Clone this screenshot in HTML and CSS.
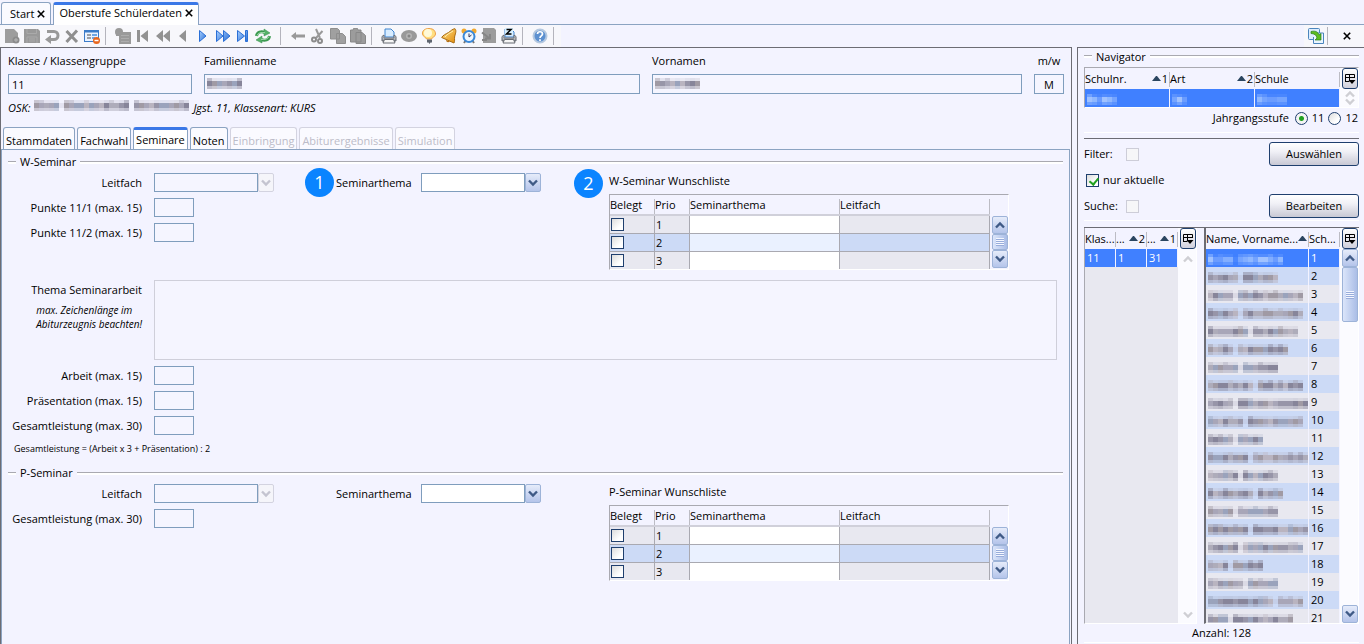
FILE: index.html
```html
<!DOCTYPE html>
<html lang="de">
<head>
  <meta charset="UTF-8" />
  <title>Oberstufe Schülerdaten</title>
  <meta name="viewport" content="width=device-width, initial-scale=1.0" />
  <link rel="stylesheet" href="styles.css">
</head>
<body>
  <svg class="defs" width="0" height="0">
    <defs>
      <linearGradient id="blue" x1="0" y1="0" x2="1" y2="1"><stop offset="0" stop-color="#a8d0ff" /><stop offset="1" stop-color="#2a6fd6" /></linearGradient>
      <linearGradient id="gold" x1="0" y1="0" x2="1" y2="1"><stop offset="0" stop-color="#ffe08a" /><stop offset="1" stop-color="#e08a08" /></linearGradient>
      <linearGradient id="metal" x1="0" y1="0" x2="0" y2="1"><stop offset="0" stop-color="#f4f4f4" /><stop offset="1" stop-color="#8e9298" /></linearGradient>
    </defs>
    <symbol id="down" viewBox="0 0 10 8"><path d="M1 1.5 5 5.5 9 1.5" fill="none" stroke="currentColor" stroke-width="2.4" /></symbol>
    <symbol id="up" viewBox="0 0 10 8"><path d="M1 6.5 5 2.500 9 6.500" fill="none" stroke="currentColor" stroke-width="2.4" /></symbol>
    <symbol id="close" viewBox="0 0 10 10"><path d="M1 1 9 9M9 1 1 9" fill="none" stroke="#000" stroke-width="2" /></symbol>
    <symbol id="sort" viewBox="0 0 9 5"><path d="M0 5 4 0h1L9 5z" fill="#2b4560" /></symbol>
    <symbol id="columns" viewBox="0 0 12 12"><path d="M1.500 8.500V1.500H10.500V5M1.500 4.500H10.500M5.500 1.500V8.500M1 8.500H5" fill="none" stroke="#000" /><path d="M4.500 7H11.500L8 11z" /></symbol>
    <symbol id="printer" viewBox="0 0 16 16">
      <path d="M4 1h6l3 3v5H4z" fill="#d8ecff" stroke="#3f84d0" />
      <path d="M1 8.500 3 7v3h10V7l2 1.500V13H1z" fill="url(#metal)" stroke="#666b72" />
      <path d="M3.500 11.500h9L14 15H2z" fill="#f5f5f5" stroke="#666b72" />
    </symbol>
  </svg>

  <nav class="window-tabs">
    <button class="tab">Start <svg width="8" height="8"><use href="#close" /></svg></button>
    <button class="tab active">Oberstufe Schülerdaten <svg width="8" height="8"><use href="#close" /></svg></button>
  </nav>

  <div class="toolbar">
    <div class="tools">
      <button aria-label="Neu"><svg viewBox="0 0 16 16"><path d="M1 1h9l4 4v10H1z" fill="#9d9d9d" /><circle cx="12" cy="12" r="3.500" fill="#8b8b8b" /><path d="M12 10v4M10 12h4" stroke="#b8b8b8" /></svg></button>
      <button aria-label="Speichern"><svg viewBox="0 0 16 16"><path d="M0 1h14l2 2v12H0z" fill="#999" /><path d="M3 1v4.500h9.500V1M3 15V9h10v6" fill="none" stroke="#aaa" /><path d="M5 11h6M5 13h6" stroke="#aaa" /></svg></button>
      <button aria-label="Rückgängig"><svg viewBox="0 0 16 16"><path d="M3 3.500h7a3.500 3.500 0 0 1 0 8H6" fill="none" stroke="#999" stroke-width="3" /><path d="M1 11.500 7 7v9z" fill="#999" /></svg></button>
      <button aria-label="Löschen"><svg viewBox="0 0 16 16"><path d="M2.500 3 13 14M13 2.500 2.500 14" stroke="#8f8f8f" stroke-width="3" /></svg></button>
      <button aria-label="Formular"><svg viewBox="0 0 16 16"><rect x=".5" y="2.500" width="14" height="11" fill="#eaf3ff" stroke="#3c7cc8" /><path d="M1 3.500h13" stroke="#3c7cc8" stroke-width="2" /><path d="M3 7h4M3 10h4" stroke="#4c4c4c" /><path d="M8 7h5M8 10h3" stroke="#6ea6e4" stroke-width="2" /><circle cx="12.500" cy="12.500" r="3.500" fill="#e8661c" /><path d="M10.500 12.500h4" stroke="#fff" stroke-width="1.500" /></svg></button>
      <i class="sep"></i>
      <button aria-label="Liste"><svg viewBox="0 0 16 16"><circle cx="4" cy="4" r="4" fill="#999" /><path d="M1 4h15v12H4V8H1z" fill="#9a9a9a" /><path d="M6 7.500h8M6 10.500h8M6 13.500h8" stroke="#adadad" /></svg></button>
      <button aria-label="Erster"><svg viewBox="0 0 16 16"><path d="M2 2h3v12H2zM13 2v12L5.500 8z" fill="#929292" /></svg></button>
      <button aria-label="Seite zurück"><svg viewBox="0 0 16 16"><path d="M8 2v12L1 8zM15 2v12L8 8z" fill="#929292" /></svg></button>
      <button aria-label="Zurück"><svg viewBox="0 0 16 16"><path d="M11 2v12L4 8z" fill="#929292" /></svg></button>
      <button aria-label="Vor"><svg viewBox="0 0 16 16"><path d="M4.500 2.500v11L11 8z" fill="url(#blue)" stroke="#2a6fd6" /></svg></button>
      <button aria-label="Seite vor"><svg viewBox="0 0 16 16"><path d="M1.500 2.500v11L8 8zM8.500 2.500v11L15 8z" fill="url(#blue)" stroke="#2a6fd6" /></svg></button>
      <button aria-label="Letzter"><svg viewBox="0 0 16 16"><path d="M2.500 2.500v11L9.500 8zM10.500 2.500h2v11h-2z" fill="url(#blue)" stroke="#2a6fd6" /></svg></button>
      <button aria-label="Aktualisieren"><svg viewBox="0 0 16 16"><path d="M1.500 8C2 4 6 3 10 4.500M14.500 8C14 12 10 13 6 11.500" fill="none" stroke="#3c9a50" stroke-width="3" /><path d="M9 1v7l6-3zM7 8v7l-6-3z" fill="#55b268" stroke="#328a48" stroke-width=".5" /><path d="M2 7.500C3 5 6 4 10 4.700M14 8.500C13 11 10 12 6 11.300" fill="none" stroke="#a4dcae" /></svg></button>
      <i class="sep wide"></i>
      <button aria-label="Pfeil"><svg viewBox="0 0 16 16"><path d="M1 8 6 4v2.500h9v3H6V12z" fill="#999" /></svg></button>
      <button aria-label="Ausschneiden"><svg viewBox="0 0 16 16"><path d="M6 1 10 10M12.500 3 6 10" stroke="#999" stroke-width="2" /><circle cx="4" cy="11.500" r="2" fill="none" stroke="#8c8c8c" stroke-width="2" /><circle cx="10" cy="13" r="2" fill="none" stroke="#8c8c8c" stroke-width="2" /></svg></button>
      <button aria-label="Kopieren"><svg viewBox="0 0 16 16"><path d="M.5.500h7l2 2V11h-9zM6.500 5.500h6l3 3v7h-9z" fill="#a0a0a0" stroke="#8e8e8e" /></svg></button>
      <button aria-label="Einfügen"><svg viewBox="0 0 16 16"><path d="M.500 2H3l1-2h3l1 2h3v12H.500zM6 4.500h6l3.500 3v8H6z" fill="#9c9c9c" stroke="#888" /></svg></button>
      <i class="sep"></i>
      <button aria-label="Drucken"><svg viewBox="0 0 16 16"><use href="#printer" /></svg></button>
      <button aria-label="Vorschau"><svg viewBox="0 0 16 16"><ellipse cx="8" cy="8" rx="8" ry="6" fill="#999" /><circle cx="8" cy="8" r="3" fill="#b4b4b4" /><circle cx="8" cy="8" r="1.500" fill="#858585" /></svg></button>
      <button aria-label="Tipp"><svg viewBox="0 0 16 16"><path d="M8 .5C3.500.500 1 3 1.500 6S5 9 5.500 11h5C11 9 14.500 9 14.500 6S12.500.500 8 .5z" fill="#ffdf80" stroke="#eda048" /><circle cx="7" cy="5" r="4" fill="#fff9d8" /><path d="M6 11.500h5v3H9.500L8.500 16 7.500 14.500H6z" fill="#5f6670" /></svg></button>
      <button aria-label="Erinnerung"><svg viewBox="0 0 16 16"><path d="M14 .7c-3 .3-4 2.300-6.500 3.800S2 7 .7 9.500L13 15c1-2 .3-3.500.6-6S16 3 14 .7z" fill="url(#gold)" stroke="#a86a10" /><path d="M5 12c0 2 2 3 4 1.500z" fill="#b87010" /><path d="M12 3C9 5 6 6 4 9" fill="none" stroke="#fff0b0" /></svg></button>
      <button aria-label="Wecker"><svg viewBox="0 0 16 16"><circle cx="3" cy="3" r="2.500" fill="#f0a830" /><circle cx="13" cy="3" r="2.500" fill="#f0a830" /><path d="M3 15 5 12M13 15 11 12" stroke="#777" stroke-width="2" /><circle cx="8" cy="8.500" r="5.500" fill="#eef7ff" stroke="#3a88d8" stroke-width="2" /><path d="M8 5.500V9l2.500-2" fill="none" stroke="#335" /></svg></button>
      <button aria-label="Export"><svg viewBox="0 0 16 16"><path d="M2 0h11l2 2v13H2z" fill="#9c9c9c" /><path d="M1 4.500 8 10M9 6v4.500H4M1 12h5" fill="none" stroke="#868686" stroke-width="2" /></svg></button>
      <button aria-label="Zeugnis drucken"><svg viewBox="0 0 16 16"><use href="#printer" /><path d="M4 0h8v7H4z" fill="#d8f0ff" /><path d="M5.500 1.500h4.500L5.500 6H10.500" fill="none" stroke="#000" stroke-width="1.500" /></svg></button>
      <i class="sep"></i>
      <button aria-label="Hilfe"><svg viewBox="0 0 16 16"><circle cx="8" cy="8" r="6.500" fill="#5c90d0" stroke="#b4c8e0" stroke-width="2" /><path d="M5.500 6C5.500 3 10.500 3 10.500 6 10.500 8 8 7.700 8 10M8 11.200v1.800" fill="none" stroke="#fff" stroke-width="1.700" /></svg></button>
      <i class="sep"></i>
    </div>
    <div class="tools right">
      <button aria-label="Ansicht wechseln"><svg viewBox="0 0 16 16"><rect x=".5" y=".5" width="11" height="11" rx="1" fill="#dcedff" stroke="#4b85bd" /><path d="M7 5h8.500v10.500H5.500V9" fill="#eaf5ff" stroke="#4b85bd" /><path d="M3 3.500c4-1 7 0 8 3.500l2-1.500v6.500H7l2-2C8.500 7 6 5.500 3 5.500z" fill="#5bbd20" stroke="#257a1a" stroke-width=".7" /></svg></button>
      <i class="sep"></i>
      <button class="shut" aria-label="Schließen"><svg viewBox="0 0 10 10"><use href="#close" /></svg></button>
    </div>
  </div>

  <div class="workspace">
    <main class="record">
      <div class="person">
        <div><label for="klasse">Klasse / Klassengruppe</label><input id="klasse" value="11" readonly /></div>
        <div><label for="name">Familienname</label><span class="masked"><input id="name" readonly /><i class="mosaic" data-words="33"></i></span></div>
        <div><label for="vorname">Vornamen</label><span class="masked"><input id="vorname" readonly /><i class="mosaic" data-words="42"></i></span></div>
        <div><label for="mw" class="center">m/w</label><input id="mw" class="center" value="M" readonly /></div>
      </div>
      <p class="osk"><span>OSK:</span> <i class="mosaic" data-words="25,65,55"></i> <span>Jgst. 11, Klassenart: KURS</span></p>

      <nav class="sub-tabs">
        <button>Stammdaten</button>
        <button>Fachwahl</button>
        <button class="active">Seminare</button>
        <button>Noten</button>
        <button disabled>Einbringung</button>
        <button disabled>Abiturergebnisse</button>
        <button disabled>Simulation</button>
      </nav>

      <div class="page">
        <h2 class="caption">W-Seminar</h2>
        <div class="seminar">
          <div class="fields">
            <label for="wLeit">Leitfach</label>
            <span class="combo off"><select id="wLeit" disabled></select><span><svg width="10" height="8"><use href="#down" /></svg></span></span>
            <label for="p1">Punkte 11/1 (max. 15)</label><input id="p1" />
            <label for="p2">Punkte 11/2 (max. 15)</label><input id="p2" />
          </div>
          <div class="topic">
            <label for="wThema"><b class="badge">1</b>Seminarthema</label>
            <span class="combo"><select id="wThema"></select><span><svg width="10" height="8"><use href="#down" /></svg></span></span>
          </div>
          <div class="wishes">
            <h3><b class="badge">2</b>W-Seminar Wunschliste</h3>
            <div class="grid-box">
              <table class="wish-table">
                <thead><tr><th class="belegt">Belegt</th><th class="prio">Prio</th><th>Seminarthema</th><th>Leitfach</th></tr></thead>
                <tbody>
                  <tr><td><input type="checkbox" aria-label="Belegt 1" /></td><td>1</td><td class="edit"></td><td></td></tr>
                  <tr><td><input type="checkbox" aria-label="Belegt 2" /></td><td>2</td><td class="edit"></td><td></td></tr>
                  <tr><td><input type="checkbox" aria-label="Belegt 3" /></td><td>3</td><td class="edit"></td><td></td></tr>
                </tbody>
              </table>
              <div class="scroll">
                <button aria-label="Nach oben"><svg width="10" height="8"><use href="#up" /></svg></button>
                <i class="thumb"></i>
                <button aria-label="Nach unten"><svg width="10" height="8"><use href="#down" /></svg></button>
              </div>
            </div>
          </div>
        </div>

        <div class="paper">
          <label for="thema">Thema Seminararbeit <small>max. Zeichenlänge im<br />Abiturzeugnis beachten!</small></label>
          <textarea id="thema"></textarea>
        </div>
        <div class="fields">
          <label for="arbeit">Arbeit (max. 15)</label><input id="arbeit" />
          <label for="praes">Präsentation (max. 15)</label><input id="praes" />
          <label for="wGesamt">Gesamtleistung (max. 30)</label><input id="wGesamt" />
        </div>
        <p class="formula">Gesamtleistung = (Arbeit x 3 + Präsentation) : 2</p>

        <h2 class="caption">P-Seminar</h2>
        <div class="seminar">
          <div class="fields">
            <label for="pLeit">Leitfach</label>
            <span class="combo off"><select id="pLeit" disabled></select><span><svg width="10" height="8"><use href="#down" /></svg></span></span>
            <label for="pGesamt">Gesamtleistung (max. 30)</label><input id="pGesamt" />
          </div>
          <div class="topic">
            <label for="pThema">Seminarthema</label>
            <span class="combo"><select id="pThema"></select><span><svg width="10" height="8"><use href="#down" /></svg></span></span>
          </div>
          <div class="wishes">
            <h3>P-Seminar Wunschliste</h3>
            <div class="grid-box">
              <table class="wish-table">
                <thead><tr><th class="belegt">Belegt</th><th class="prio">Prio</th><th>Seminarthema</th><th>Leitfach</th></tr></thead>
                <tbody>
                  <tr><td><input type="checkbox" aria-label="Belegt 1" /></td><td>1</td><td class="edit"></td><td></td></tr>
                  <tr><td><input type="checkbox" aria-label="Belegt 2" /></td><td>2</td><td class="edit"></td><td></td></tr>
                  <tr><td><input type="checkbox" aria-label="Belegt 3" /></td><td>3</td><td class="edit"></td><td></td></tr>
                </tbody>
              </table>
              <div class="scroll">
                <button aria-label="Nach oben"><svg width="10" height="8"><use href="#up" /></svg></button>
                <i class="thumb"></i>
                <button aria-label="Nach unten"><svg width="10" height="8"><use href="#down" /></svg></button>
              </div>
            </div>
          </div>
        </div>
      </div>
    </main>

    <aside class="navigator">
      <h2 class="caption">Navigator</h2>
      <div class="grid-box">
        <table class="list">
          <thead><tr>
            <th><span>Schulnr. <em><svg width="9" height="5"><use href="#sort" /></svg>1</em></span></th>
            <th><span>Art <em><svg width="9" height="5"><use href="#sort" /></svg>2</em></span></th>
            <th>Schule</th>
          </tr></thead>
          <tbody><tr class="selected"><td><i class="mosaic light" data-words="28"></i></td><td><i class="mosaic light" data-words="14"></i></td><td><i class="mosaic light" data-words="28"></i></td></tr></tbody>
        </table>
        <div class="scroll">
          <button class="pick" aria-label="Spalten"><svg width="12" height="12"><use href="#columns" /></svg></button>
          <div class="idle"><svg width="10" height="8"><use href="#up" /></svg><svg width="10" height="8"><use href="#down" /></svg></div>
        </div>
      </div>
      <div class="grade">
        <span>Jahrgangsstufe</span>
        <label><input type="radio" name="stufe" checked />11</label>
        <label><input type="radio" name="stufe" />12</label>
      </div>

      <div class="filters">
        <div class="line"><label for="filter">Filter:</label><input id="filter" type="checkbox" disabled /><button class="push">Auswählen</button></div>
        <div class="line"><label class="current"><input type="checkbox" checked />nur aktuelle</label></div>
        <div class="line"><label for="suche">Suche:</label><input id="suche" type="checkbox" disabled /><button class="push">Bearbeiten</button></div>
      </div>

      <div class="lists">
        <div class="grid-box classes">
          <div class="rows">
            <table class="list">
              <thead><tr>
                <th>Klas...</th>
                <th><span>... <em><svg width="9" height="5"><use href="#sort" /></svg>2</em></span></th>
                <th><span>... <em><svg width="9" height="5"><use href="#sort" /></svg>1</em></span></th>
              </tr></thead>
              <tbody><tr class="selected"><td>11</td><td>1</td><td>31</td></tr></tbody>
            </table>
          </div>
          <div class="scroll">
            <button class="pick" aria-label="Spalten"><svg width="12" height="12"><use href="#columns" /></svg></button>
            <div class="idle"><svg width="10" height="8"><use href="#up" /></svg><svg width="10" height="8"><use href="#down" /></svg></div>
          </div>
        </div>
        <div class="grid-box pupils">
          <div class="rows">
            <table class="list">
              <thead><tr>
                <th><span>Name, Vorname... <em><svg width="9" height="5"><use href="#sort" /></svg></em></span></th>
                <th class="nr">Sch...</th>
              </tr></thead>
              <tbody id="pupilRows"></tbody>
            </table>
          </div>
          <div class="scroll">
            <button class="pick" aria-label="Spalten"><svg width="12" height="12"><use href="#columns" /></svg></button>
            <button aria-label="Nach oben"><svg width="10" height="8"><use href="#up" /></svg></button>
            <i class="thumb tall"></i>
            <i class="track"></i>
            <button aria-label="Nach unten"><svg width="10" height="8"><use href="#down" /></svg></button>
          </div>
        </div>
      </div>
      <p class="count">Anzahl: 128</p>
    </aside>
  </div>
  <script src="script.js"></script>
</body>
</html>
```
FILE: styles.css
```css
* { box-sizing: border-box; }
body {
  margin: 0;
  height: 100vh;
  display: flex;
  flex-direction: column;
  overflow: hidden;
  background: #f3f3ff;
  color: #000;
  font: 11px/16px "Open Sans", "Noto Sans", sans-serif;
}
button, input, select, textarea { font: inherit; color: inherit; margin: 0; padding: 0; }
button { border: none; background: none; }
h2, h3, p { margin: 0; font-size: 11px; font-weight: normal; }
svg { display: block; flex: none; }
.defs { position: absolute; }

/* window tabs */
.window-tabs { display: flex; gap: 2px; height: 25px; padding: 2px 1px 0; border-bottom: 1px solid #8ba3c2; flex: none; }
.tab { display: flex; align-items: center; gap: 3px; padding: 0 5px 0 8px; border: 1px solid #8ba3c2; border-bottom: none; border-radius: 3px 3px 0 0; background: #fafaff; }
.tab.active { padding: 0 5px; border-top: 3px solid #3b78e7; background: #fff; margin-bottom: -1px; padding-bottom: 4px; }

/* toolbar */
.toolbar { display: flex; justify-content: space-between; height: 22px; flex: none; }
.tools { display: flex; align-items: center; padding-left: 2px; background: #f7f7fb; }
.tools button { width: 20px; height: 20px; padding: 2px; }
.tools svg { width: 16px; height: 16px; }
.sep { width: 1px; height: 18px; margin: 0 7px 0 3px; background: #b4b4bc; }
.sep.wide { margin-left: 7px; }
.tools.right .sep { margin: 0 9px 0 1px; }
.tools.right .shut svg { width: 8px; height: 8px; margin: auto; }
.tools.right { padding-right: 7px; }

.workspace { flex: 1; display: flex; gap: 5px; min-height: 0; }
.record { flex: 1; min-width: 0; display: flex; flex-direction: column; border: 1px solid #6c6c74; border-bottom: none; padding-right: 1px; }

.person { display: grid; grid-template-columns: 184fr 436fr 370fr 30px; gap: 12px; padding: 5px 6px 0 7px; }
.person label { display: block; height: 21px; }
.person input { display: block; width: 100%; height: 20px; padding: 0 3px; }
.person .center { text-align: center; }
input, textarea, select { border: 1px solid #7f9dbd; background: #f5f5ff; border-radius: 0; outline: none; }
.masked { display: block; position: relative; }
.masked .mosaic { position: absolute; left: 3px; top: 4px; }
.osk { display: flex; gap: 4px; padding: 6px 7px 0; height: 33px; align-items: flex-start; font-style: italic; }

.sub-tabs { display: flex; gap: 2px; height: 22px; padding: 0 2px; }
.sub-tabs button { padding: 4px 2px 0; border: 1px solid #8ba3c2; border-bottom: none; border-radius: 3px 3px 0 0; background: #fafaff; }
.sub-tabs .active { border-top: 3px solid #3b78e7; padding-top: 0; background: #fff; margin: 0 0 -1px; }
.sub-tabs button:disabled { color: #bcbcc8; border-color: #d3d3e0; }

.page { flex: 1; min-height: 0; overflow: hidden; border: 1px solid #8ba3c2; border-bottom: none; padding: 4px 6px 0; }
.caption { display: flex; align-items: center; gap: 4px; height: 16px; }
.caption::before, .caption::after { content: ""; height: 2px; border-top: 1px solid #a9a9b1; background: #fff; width: 8px; }
.caption::after { flex: 1; }

.seminar { display: grid; grid-template-columns: 266px 335px 1fr; padding-top: 3px; }
.fields { display: grid; grid-template-columns: 134px 1fr; gap: 6px 12px; align-content: start; align-items: center; line-height: 19px; }
.fields label { text-align: right; white-space: nowrap; }
.fields input { width: 40px; height: 19px; }
.combo { display: flex; height: 19px; }
.combo select { width: 104px; appearance: none; background: #fff; }
.combo > span { width: 16px; display: flex; align-items: center; justify-content: center; border: 1px solid #9db3d8; border-radius: 2px; background: linear-gradient(#e6ecfa, #b4c4ea); color: #3f5a86; }
.combo.off select { background: #f5f5ff; opacity: 1; }
.combo.off > span { border-color: #d3d3e0; background: #f5f5fa; color: #c4c4d0; }
.topic { display: flex; gap: 12px; line-height: 19px; align-items: flex-start; }
.topic label { position: relative; width: 135px; padding-left: 62px; white-space: nowrap; }
.badge { position: absolute; width: 29px; height: 29px; border-radius: 50%; background: #0a84ff; color: #fff; font: 18px/29px "Open Sans", sans-serif; text-align: center; }
.topic .badge { left: 31px; top: -5px; }
.wishes h3 { position: relative; height: 21px; line-height: 16px; }
.wishes .badge { left: -35px; top: -4px; }
.wishes { width: 400px; }

.paper { display: grid; grid-template-columns: 134px 1fr; gap: 12px; padding: 10px 6px 6px 0; }
.paper label { text-align: right; white-space: nowrap; line-height: 19px; }
.paper small { display: block; width: max-content; margin: 4px 0 0 auto; font-size: 10px; line-height: 14px; font-style: italic; text-align: left; }
.paper textarea { height: 80px; resize: none; border-color: #cfcfda; }
.formula { margin: 6px 0 8px 6px; font-size: 9px; line-height: 16px; }

/* grids */
.grid-box { display: flex; border: 1px solid #a9a9b1; border-right-color: #fff; border-bottom-color: #fff; }
table { border-collapse: separate; border-spacing: 0; table-layout: fixed; width: 100%; }
th { text-align: left; font-weight: normal; padding: 0 1px; height: 21px; white-space: nowrap; background: linear-gradient(#bcbcc4, #bcbcc4) right 4px / 1px 15px no-repeat; }
.wish-table th { border-bottom: 2px solid #d0d0da; padding: 0; }
.wish-table td { height: 18px; padding: 0 1px; border-right: 1px solid #a9a9b1; border-bottom: 1px solid #a9a9b1; background: #e8e8f0; line-height: 15px; }
.wish-table tr:last-child td { border-bottom: none; height: 17px; }
.wish-table tr:nth-child(2) td { background: #ccdaf6; }
.wish-table .edit { background: #fff; }
.wish-table tr:nth-child(2) .edit { background: #eaf1ff; }
.belegt { width: 45px; }
.prio { width: 35px; }

input[type="checkbox"] { appearance: none; display: block; width: 13px; height: 13px; border: 1px solid #1f3f6e; background: linear-gradient(135deg, #dcdcdc, #fff 70%); flex: none; }
input[type="checkbox"]:disabled { border-color: #cdcdd8; background: #f6f6f8; }
input[type="checkbox"]:checked::before { content: ""; display: block; width: 4px; height: 7px; margin: 1px 0 0 4px; border: solid #21a121; border-width: 0 2px 2px 0; transform: rotate(40deg); }
input[type="radio"] { appearance: none; width: 13px; height: 13px; border: 1px solid #1f3f6e; border-radius: 50%; background: linear-gradient(135deg, #dcdcdc, #fff 70%); }
input[type="radio"]:checked { background: radial-gradient(#21a121 0 2px, #f4f4f4 3px); }

.scroll { width: 18px; flex: none; display: flex; flex-direction: column; padding-left: 2px; background: #fbfbff; }
.wishes .scroll { padding-top: 21px; background: #f3f3ff; }
.scroll button { height: 18px; flex: none; display: flex; align-items: center; justify-content: center; border: 1px solid #9db3d8; border-radius: 2px; background: linear-gradient(#e6ecfa, #b4c4ea); color: #3f5a86; }
.scroll .pick { height: 21px; border-color: #1f3f6e; border-radius: 3px; background: linear-gradient(#fff, #d0d0dc); }
.thumb { height: 16px; flex: none; border: 1px solid #9db3d8; border-radius: 2px; background: repeating-linear-gradient(#f4f7ff 0 1px, #98addb 1px 2px) center / 8px 8px no-repeat, linear-gradient(90deg, #dbe5fa, #aabde6); }
.thumb.tall { height: 55px; }
.track { flex: 1; }
.idle { flex: 1; display: flex; flex-direction: column; justify-content: space-between; align-items: center; color: #cfcfd4; padding: 1px 0; }

/* navigator */
.navigator { width: 287px; flex: none; display: flex; flex-direction: column; border: solid #6c6c74; border-width: 1px 0 0 1px; padding: 0 5px 1px 6px; min-height: 0; }
.navigator .caption { height: 17px; margin-bottom: 2px; }
.list th span { display: flex; justify-content: space-between; align-items: center; }
.list th { padding-left: 0; }
.list em { display: flex; align-items: center; gap: 1px; font-style: normal; padding-right: 1px; }
.list td { height: 18px; padding: 0 2px; overflow: hidden; background: #e8e8f0; border-right: 1px solid #f3f3ff; white-space: nowrap; line-height: 16px; }
.list tr:nth-child(even) td { background: #ccdaf6; }
.list .selected td { background: #4080ff; color: #fff; }
.grade { display: flex; justify-content: flex-end; align-items: center; height: 25px; gap: 4px; padding: 0 1px 4px 0; border-bottom: 1px solid #fff; }
.grade span { padding-right: 2px; }
.grade label { display: flex; align-items: center; gap: 4px; }
.filters { height: 90px; margin-top: 5px; padding-top: 2px; border-top: 1px solid #6c6c74; border-bottom: 1px solid #6c6c74; }
.filters::after { content: ""; display: block; height: 1px; margin-top: 1px; background: #fff; }
.line { display: flex; align-items: center; height: 26px; }
.line > label { width: 42px; }
.line > .current { display: flex; align-items: center; gap: 4px; width: auto; padding-left: 2px; }
.push { width: 90px; height: 24px; margin-left: auto; border: 1px solid #1f3f6e; border-radius: 3px; background: linear-gradient(#fff, #f0f0f6 40%, #c8c8d4); }
.lists { flex: 1; min-height: 0; display: flex; gap: 7px; }
.lists .grid-box { border-top: none; }
.lists .rows { flex: 1; min-width: 0; overflow: hidden; background: #e8e8f0; }
.lists th { background-color: #f3f3ff; }
.classes { width: 113px; }
.pupils { flex: 1; border-left: 2px solid #6c6c74; min-width: 0; }
.nr { width: 31px; }
.classes .idle { padding: 6px 0 4px; }
.count { text-align: center; line-height: 18px; border-bottom: 1px solid #fff; }

.mosaic { display: inline-block; vertical-align: middle; }
.mosaic svg { shape-rendering: crispEdges; }
```
FILE: script.js
```js
const GREY = ["#9795a8", "#a8a6b8", "#a09aa4", "#b9b4c0", "#9aa3bc", "#aeacba", "#87859a"];
const LIGHT = ["#8fb8ff", "#74a4ff", "#a0c2ff", "#6a9cff", "#82aeff"];

// word widths in px for every masked name in the pupil list
const pupils = ["25,45", "30,35", "25,65", "30,60", "40,45", "25,50", "30,35", "45,45", "25,70", "35,55", "25,25",
  "40,55", "30,35", "45,25", "25,40", "40,55", "30,60", "20,30", "35,30", "65,25", "20,60"];

// masked names are drawn as 5px blocks
function drawMosaic(el, seed) {
  const colors = el.classList.contains("light") ? LIGHT : GREY;
  let x = 0, rects = "", n = seed;
  el.dataset.words.split(",").forEach(word => {
    const end = x + Number(word);
    for (let first = true; x < end; x += 5) {
      n = (n * 73 + 41) % 997;
      const c = colors[n % colors.length];
      const up = first || n % 4 === 0 ? 0.5 : 0.2;
      rects += `<rect x="${x}" y="0" width="5" height="3" fill="${c}" opacity="${up}"/>`;
      rects += `<rect x="${x}" y="3" width="5" height="5" fill="${c}"/>`;
      rects += `<rect x="${x}" y="8" width="5" height="3" fill="${c}" opacity="0.5"/>`;
      first = false;
    }
    // the gap between two words is a faint block
    if (x < 90) rects += `<rect x="${x}" y="3" width="5" height="5" fill="${colors[1]}" opacity="0.2"/>`;
    x += 5;
  });
  el.innerHTML = `<svg width="${x - 5}" height="11">${rects}</svg>`;
}

document.getElementById("pupilRows").innerHTML = pupils.map((words, i) =>
  `<tr class="${i === 0 ? "selected" : ""}"><td><i class="mosaic ${i === 0 ? "light" : ""}" data-words="${words}"></i></td><td>${i + 1}</td></tr>`
).join("");

document.querySelectorAll(".mosaic").forEach((el, i) => drawMosaic(el, i * 31 + 7));
```
